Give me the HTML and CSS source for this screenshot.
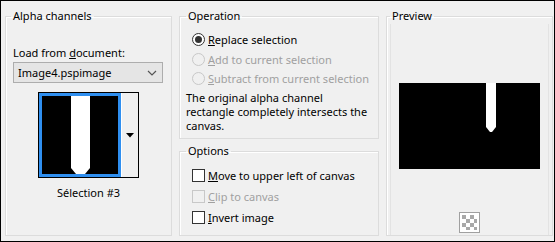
FILE: index.html
```html
<!DOCTYPE html>
<html lang="en">
<head>
  <meta charset="UTF-8" />
  <title>Load Selection From Alpha Channel</title>
  <link rel="stylesheet" href="styles.css">
</head>
<body>
  <div class="dialog">

    <fieldset class="group alpha">
      <legend>Alpha channels</legend>
      <div class="field-label">Load from <u>d</u>ocument:</div>
      <div class="select">
        <span>Image4.pspimage</span>
        <svg class="chevron" width="10" height="6" viewBox="0 0 10 6"><path d="M1 1 L5 5 L9 1" fill="none" stroke="#555" stroke-width="1.2"/></svg>
      </div>
      <div class="thumb">
        <div class="thumb-img">
          <svg width="76" height="80" viewBox="0 0 76 80">
            <rect width="76" height="80" fill="#000"/>
            <path d="M29 0 H48 V72 L43 78 H34 L29 72 Z" fill="#fff"/>
          </svg>
        </div>
        <div class="thumb-drop">
          <svg width="8" height="5" viewBox="0 0 8 5"><path d="M0 0 H8 L4 4.5 Z" fill="#000"/></svg>
        </div>
      </div>
      <div class="thumb-name">Sélection #3</div>
    </fieldset>

    <div class="middle">
      <fieldset class="group operation">
        <legend>Operation</legend>
        <div class="choice"><span class="radio checked"></span><span><u>R</u>eplace selection</span></div>
        <div class="choice disabled"><span class="radio"></span><span><u>A</u>dd to current selection</span></div>
        <div class="choice disabled"><span class="radio"></span><span><u>S</u>ubtract from current selection</span></div>
        <p class="note">The original alpha channel rectangle completely intersects the canvas.</p>
      </fieldset>

      <fieldset class="group options">
        <legend>Options</legend>
        <div class="choice check-row"><span class="check"></span><span><u>M</u>ove to upper left of canvas</span></div>
        <div class="choice check-row disabled"><span class="check"></span><span><u>C</u>lip to canvas</span></div>
        <div class="choice check-row"><span class="check"></span><span><u>I</u>nvert image</span></div>
      </fieldset>
    </div>

    <fieldset class="group preview">
      <legend>Preview</legend>
      <div class="preview-inner">
        <div class="preview-img">
          <svg width="141" height="86" viewBox="0 0 141 86">
            <rect width="141" height="86" fill="#000"/>
            <path d="M87 0 H97 V44 L93 49 H91 L87 44 Z" fill="#fff"/>
          </svg>
        </div>
        <div class="checker">
          <svg width="21" height="21" viewBox="0 0 21 21">
            <rect x="0.5" y="0.5" width="20" height="20" fill="#fff" stroke="#a0a0a0"/>
            <g fill="#a8a8a8">
              <rect x="3" y="3" width="4" height="4"/><rect x="11" y="3" width="4" height="4"/>
              <rect x="7" y="7" width="4" height="4"/><rect x="15" y="7" width="3" height="4"/>
              <rect x="3" y="11" width="4" height="4"/><rect x="11" y="11" width="4" height="4"/>
              <rect x="7" y="15" width="4" height="3"/><rect x="15" y="15" width="3" height="3"/>
            </g>
          </svg>
        </div>
      </div>
    </fieldset>

  </div>
</body>
</html>
```

FILE: styles.css
```css
* {
  margin: 0;
  padding: 0;
  box-sizing: border-box;
}

body {
  background-color: #f0f0f0;
  font-family: "Noto Sans", "Liberation Sans", sans-serif;
  font-size: 11px;
  color: #000;
}

.dialog {
  width: 555px;
  height: 242px;
  border: 1px solid #000;
  background-color: #f0f0f0;
  display: grid;
  grid-template-columns: 167px 200px 167px;
  column-gap: 7px;
  padding: 7px 3px 5px 4px;
}

.group {
  border: 1px solid #dcdcdc;
  box-shadow: inset 1px 1px 0 #fff;
  padding: 0 5px;
  min-width: 0;
}

.group legend {
  padding: 0 2px;
  line-height: 16px;
}

u {
  text-decoration: underline;
  text-underline-offset: 1px;
}

/* alpha channels */

.field-label {
  margin: 21px 0 0 2px;
  line-height: 16px;
}

.select {
  margin: 1px 0 0 2px;
  width: 150px;
  height: 21px;
  background-color: #e5e5e5;
  border: 1px solid #adadad;
  display: flex;
  align-items: center;
  justify-content: space-between;
  padding: 0 5px 0 4px;
}

.thumb {
  margin: 9px 0 0 27px;
  width: 101px;
  height: 86px;
  border: 1px solid #000;
  display: flex;
}

.thumb-img {
  border: 3px solid #2f8ff0;
  width: 82px;
  height: 84px;
  background-color: #000;
  overflow: hidden;
}

.thumb-img svg {
  display: block;
}

.thumb-drop {
  flex: 1;
  background-color: #f0f0f0;
  border-left: 1px solid #fff;
  display: flex;
  align-items: center;
  justify-content: center;
}

.thumb-name {
  margin: 7px 0 0 27px;
  width: 101px;
  text-align: center;
  line-height: 16px;
}

/* operation / options */

.middle {
  display: flex;
  flex-direction: column;
  gap: 4px;
}

.operation {
  height: 131px;
  padding-left: 6px;
}

.options {
  flex: 1;
  padding-left: 6px;
}

.choice {
  display: flex;
  align-items: center;
  gap: 3px;
  height: 19.5px;
  padding-left: 6px;
  white-space: nowrap;
}

.choice.disabled {
  color: #a0a0a0;
}

.operation .choice:first-of-type {
  margin-top: 6px;
}

.radio {
  width: 13px;
  height: 13px;
  border-radius: 50%;
  border: 1px solid #333;
  background-color: #fff;
  display: flex;
  align-items: center;
  justify-content: center;
}

.radio.checked::after {
  content: "";
  width: 7px;
  height: 7px;
  border-radius: 50%;
  background-color: #333;
}

.disabled .radio {
  border-color: #c8c8c8;
  background-color: #f0f0f0;
}

.note {
  margin-top: 2px;
  line-height: 14px;
}

.check-row {
  height: 21px;
}

.options .choice:first-of-type {
  margin-top: 6px;
}

.check {
  width: 13px;
  height: 13px;
  border: 1px solid #333;
  background-color: #fff;
}

.disabled .check {
  border-color: #c8c8c8;
  background-color: #f0f0f0;
}

/* preview */

.preview {
  padding: 0 3px;
}

.preview-inner {
  height: 100%;
  border-left: 1px solid #e3e3e3;
  border-right: 1px solid #e3e3e3;
  display: flex;
  flex-direction: column;
  align-items: center;
}

.preview-img {
  margin-top: 59px;
  width: 141px;
  height: 86px;
}

.preview-img svg,
.checker svg {
  display: block;
}

.checker {
  margin-top: 43px;
}
```
